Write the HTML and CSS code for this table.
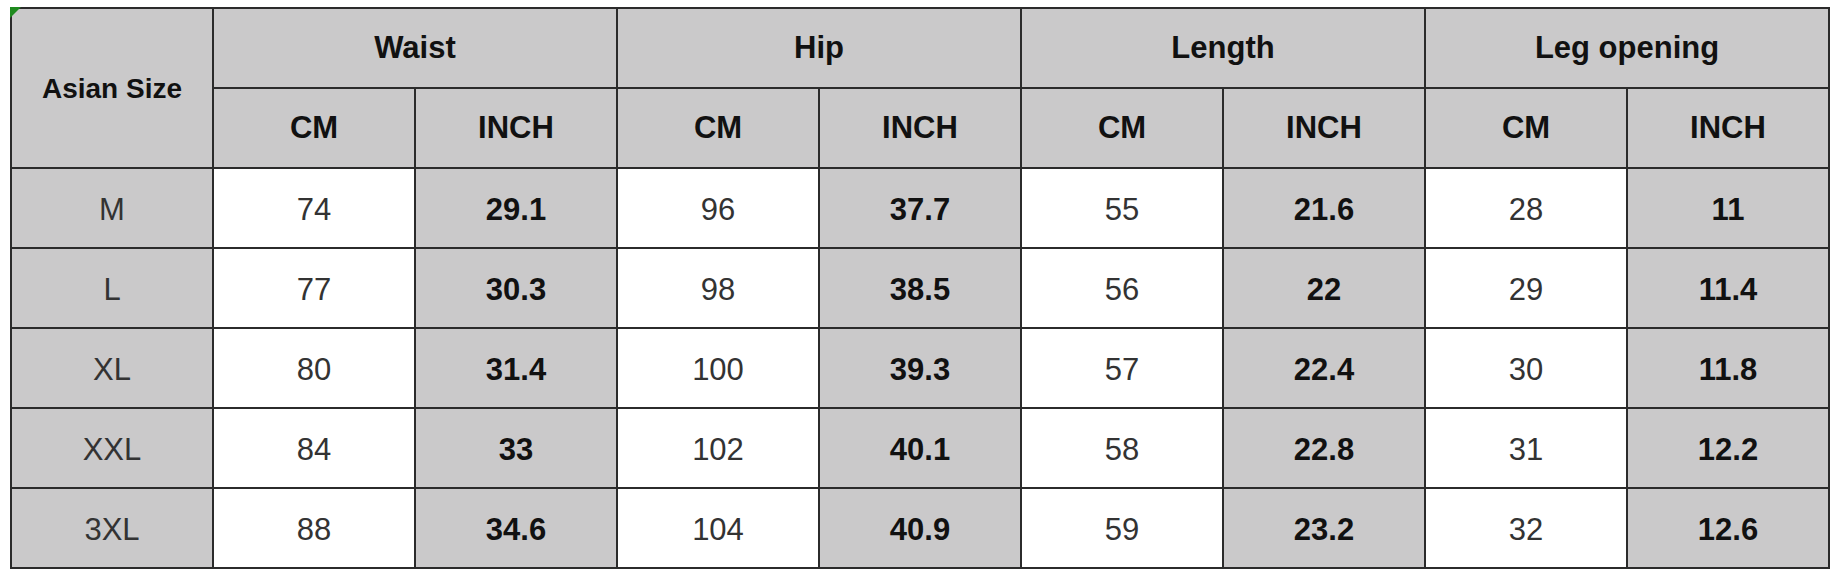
FILE: index.html
```html
<!DOCTYPE html>
<html>
<head>
<meta charset="utf-8">
<link rel="stylesheet" href="styles.css">
</head>
<body>
<div class="wrap">
<table class="size-table">
  <colgroup>
    <col class="c"><col class="c"><col class="c"><col class="c"><col class="c"><col class="c"><col class="c"><col class="c"><col class="c">
  </colgroup>
  <thead>
    <tr>
      <th rowspan="2" class="corner"><span class="flag"></span><span class="asian">Asian Size</span></th>
      <th colspan="2">Waist</th>
      <th colspan="2">Hip</th>
      <th colspan="2">Length</th>
      <th colspan="2">Leg opening</th>
    </tr>
    <tr>
      <th>CM</th><th>INCH</th>
      <th>CM</th><th>INCH</th>
      <th>CM</th><th>INCH</th>
      <th>CM</th><th>INCH</th>
    </tr>
  </thead>
  <tbody>
    <tr><td class="sz">M</td><td class="cm">74</td><td class="in">29.1</td><td class="cm">96</td><td class="in">37.7</td><td class="cm">55</td><td class="in">21.6</td><td class="cm">28</td><td class="in">11</td></tr>
    <tr><td class="sz">L</td><td class="cm">77</td><td class="in">30.3</td><td class="cm">98</td><td class="in">38.5</td><td class="cm">56</td><td class="in">22</td><td class="cm">29</td><td class="in">11.4</td></tr>
    <tr><td class="sz">XL</td><td class="cm">80</td><td class="in">31.4</td><td class="cm">100</td><td class="in">39.3</td><td class="cm">57</td><td class="in">22.4</td><td class="cm">30</td><td class="in">11.8</td></tr>
    <tr><td class="sz">XXL</td><td class="cm">84</td><td class="in">33</td><td class="cm">102</td><td class="in">40.1</td><td class="cm">58</td><td class="in">22.8</td><td class="cm">31</td><td class="in">12.2</td></tr>
    <tr><td class="sz">3XL</td><td class="cm">88</td><td class="in">34.6</td><td class="cm">104</td><td class="in">40.9</td><td class="cm">59</td><td class="in">23.2</td><td class="cm">32</td><td class="in">12.6</td></tr>
  </tbody>
</table>
</div>
</body>
</html>
```

FILE: styles.css
```css
html, body {
  margin: 0;
  padding: 0;
  background: #ffffff;
}

.wrap {
  padding: 7px 0 0 10px;
}

.size-table {
  border-collapse: collapse;
  table-layout: fixed;
  width: 1820px;
  font-family: "Liberation Sans", Arial, sans-serif;
  font-size: 31px;
  color: #333333;
}

.size-table col.c {
  width: 202px;
}

.size-table th,
.size-table td {
  border: 2px solid #2b2b2b;
  text-align: center;
  vertical-align: middle;
  padding: 0;
  height: 78px;
  background: #cac9ca;
}

.size-table td {
  padding-top: 4px;
  height: 74px;
}

.size-table th {
  font-weight: bold;
  color: #111111;
}

.corner {
  position: relative;
}

.asian {
  font-size: 28px;
}

.flag {
  position: absolute;
  top: -2px;
  left: -2px;
  width: 0;
  height: 0;
  border-top: 11px solid #1f8a1f;
  border right: 0;
  border-right: 11px solid transparent;
}

.size-table td.sz {
  background: #cac9ca;
  color: #333333;
}

.size-table td.cm {
  background: #ffffff;
  color: #333333;
}

.size-table td.in {
  background: #cac9ca;
  font-weight: bold;
  color: #111111;
}
```
